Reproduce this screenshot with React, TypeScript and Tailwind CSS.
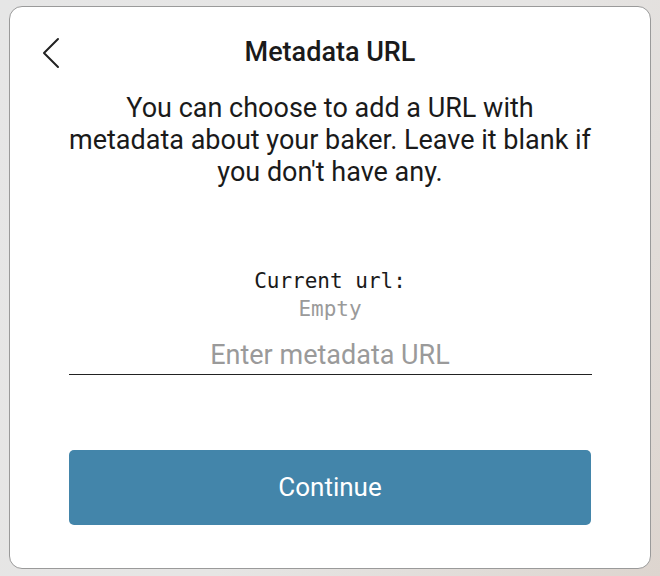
import React from "react";

export default function App() {
  return (
    <div className="w-[660px] h-[576px] bg-[linear-gradient(120deg,#e6e6e6_0%,#e6e5e4_55%,#ddd5cf_100%)] pt-[6px] pl-[9px] font-['Roboto',sans-serif]">
      <div className="h-[563px] w-[642px] rounded-[13px] border border-[#9a9a9a] bg-white flex flex-col items-center relative">
        <button className="absolute left-[30px] top-[29px]">
          <svg width="24" height="34" viewBox="0 0 24 34" fill="none" stroke="#222" strokeWidth="2" strokeLinecap="round" strokeLinejoin="round">
            <path d="M18 3 L4 17 L18 31" />
          </svg>
        </button>
        <h1 className="mt-[29px] text-[27px] leading-[32px] font-medium text-[#1a1a1a]">Metadata URL</h1>
        <p className="mt-[24px] text-center text-[27px] leading-[32px] text-[#1a1a1a] whitespace-nowrap">
          You can choose to add a URL with
          <br />
          metadata about your baker. Leave it blank if
          <br />
          you don't have any.
        </p>
        <div className="mt-[79px] text-center font-['DejaVu_Sans_Mono',monospace] text-[21px] leading-[28px] text-[#1a1a1a]">Current url:</div>
        <div className="text-center font-['DejaVu_Sans_Mono',monospace] text-[21px] leading-[28px] text-[#9a9a9a]">Empty</div>
        <input
          placeholder="Enter metadata URL"
          className="mt-[14px] w-[523px] h-[38px] text-center text-[27px] border-b border-[#222] outline-none placeholder:text-[#9a9a9a] bg-transparent"
        />
        <button className="mt-[75px] w-[522px] h-[75px] rounded-[5px] bg-[#4385aa] text-white text-[26px]">Continue</button>
      </div>
    </div>
  );
}
